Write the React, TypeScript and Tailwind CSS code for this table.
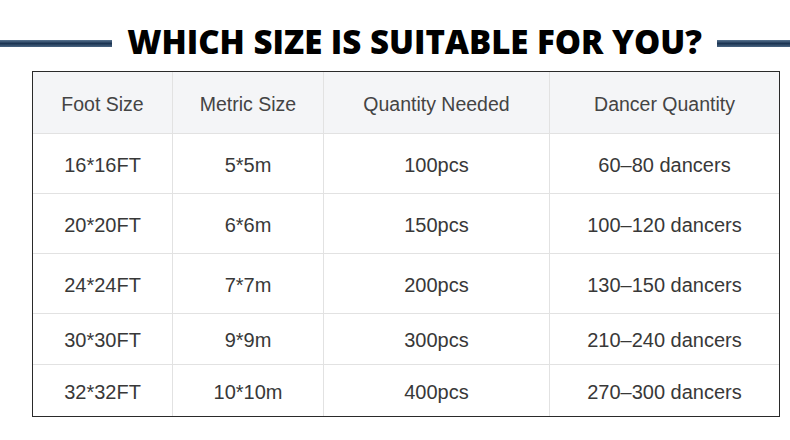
import React from 'react';

const headers = ['Foot Size', 'Metric Size', 'Quantity Needed', 'Dancer Quantity'];

const rows: { cells: string[]; h: string }[] = [
  { cells: ['16*16FT', '5*5m', '100pcs', '60–80 dancers'], h: 'h-[60px]' },
  { cells: ['20*20FT', '6*6m', '150pcs', '100–120 dancers'], h: 'h-[60px]' },
  { cells: ['24*24FT', '7*7m', '200pcs', '130–150 dancers'], h: 'h-[60px]' },
  { cells: ['30*30FT', '9*9m', '300pcs', '210–240 dancers'], h: 'h-[51px]' },
  { cells: ['32*32FT', '10*10m', '400pcs', '270–300 dancers'], h: 'h-[51px]' },
];

const colWidths = ['w-[140px]', 'w-[151px]', 'w-[226px]', 'flex-1'];

const Bar = ({ className }: { className: string }) => (
  <div className={`h-[7px] bg-gradient-to-b from-[#5a7592] via-[#1c3553] to-[#4a6683] ${className}`} />
);

export default function App() {
  return (
    <div className="w-[790px] h-[440px] bg-white overflow-hidden font-['Liberation_Sans',Arial,sans-serif]">
      <div className="flex items-center h-[71px] pt-[15px]">
        <Bar className="w-[112px]" />
        <h1 className="flex-1 text-center text-[33px] leading-none font-extrabold text-black font-['Open_Sans',sans-serif] -mt-[4px]">
          WHICH SIZE IS SUITABLE FOR YOU?
        </h1>
        <Bar className="w-[73px]" />
      </div>
      <div className="ml-[32px] w-[748px] border-[1.5px] border-[#2a2a2a] text-[#383838]">
        <div className="flex h-[62px] bg-[#f4f5f7] border-b border-[#e2e2e2]">
          {headers.map((t, i) => (
            <div
              key={t}
              className={`${colWidths[i]} flex items-center justify-center pt-[5px] text-[19.5px] text-[#444] ${i < 3 ? 'border-r border-[#e2e2e2]' : ''}`}
            >
              {t}
            </div>
          ))}
        </div>
        {rows.map((r, ri) => (
          <div key={ri} className={`flex ${r.h} ${ri < rows.length - 1 ? 'border-b border-[#e2e2e2]' : ''}`}>
            {r.cells.map((c, i) => (
              <div
                key={i}
                className={`${colWidths[i]} flex items-center justify-center pt-[2px] text-[20px] ${i < 3 ? 'border-r border-[#e2e2e2]' : ''}`}
              >
                {c}
              </div>
            ))}
          </div>
        ))}
      </div>
    </div>
  );
}
